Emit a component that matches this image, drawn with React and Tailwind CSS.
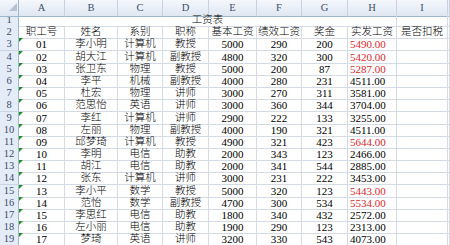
import React from 'react';

const grid = 'grid grid-cols-[19px_46px_53px_45px_46px_48px_45px_46px_49px_51px_1fr]';
const letters = ['A', 'B', 'C', 'D', 'E', 'F', 'G', 'H', 'I', ''];
const heads = ['职工号', '姓名', '系别', '职称', '基本工资', '绩效工资', '奖金', '实发工资', '是否扣税'];

const rows = [
  ['01', '李小明', '计算机', '教授', 5000, 290, 200, '5490.00', true],
  ['02', '胡大江', '计算机', '副教授', 4800, 320, 300, '5420.00', true],
  ['03', '张卫东', '物理', '教授', 5000, 200, 87, '5287.00', true],
  ['04', '李平', '机械', '副教授', 4000, 280, 231, '4511.00'],
  ['05', '杜宏', '物理', '讲师', 3000, 270, 311, '3581.00'],
  ['06', '范思怡', '英语', '讲师', 3000, 360, 344, '3704.00'],
  ['07', '李红', '计算机', '讲师', 2900, 222, 133, '3255.00'],
  ['08', '左丽', '物理', '副教授', 4000, 190, 321, '4511.00'],
  ['09', '邱梦琦', '计算机', '教授', 4900, 321, 423, '5644.00', true],
  ['10', '李明', '电信', '助教', 2000, 343, 123, '2466.00'],
  ['11', '胡江', '电信', '助教', 2000, 341, 544, '2885.00'],
  ['12', '张东', '计算机', '讲师', 3000, 231, 222, '3453.00'],
  ['13', '李小平', '数学', '教授', 5000, 320, 123, '5443.00', true],
  ['14', '范怡', '数学', '副教授', 4700, 300, 534, '5534.00', true],
  ['15', '李思红', '电信', '助教', 1800, 340, 432, '2572.00'],
  ['16', '左小丽', '电信', '助教', 1900, 290, 123, '2313.00'],
  ['17', '梦琦', '英语', '讲师', 3200, 330, 543, '4073.00'],
];

const cell = 'border-r border-b border-[#d4dbe7] flex items-center justify-center whitespace-nowrap overflow-hidden';
const cjk = 'text-[10.5px] leading-[12px] font-light';
const num = 'text-[11px] leading-[12px]';

function RowNum({ n }) {
  return (
    <div className="bg-[#e4ecf7] border-r border-r-[#9eb6ce] border-b border-b-[#c9d5e4] flex items-center justify-center text-[10.5px] leading-[12px] text-[#3b4d6e]">
      {n}
    </div>
  );
}

export default function App() {
  return (
    <div className="w-[450px] h-[245px] overflow-hidden bg-white text-black font-['Liberation_Serif','Noto_Sans_CJK_SC',serif]">
      {/* column letters */}
      <div className={`${grid} h-[14px]`}>
        <div className="relative bg-gradient-to-b from-[#f4f7fb] to-[#dfe7f2] border-r border-r-[#9eb6ce] border-b border-b-[#9eb6ce]">
          <svg className="absolute left-[9px] top-[3px]" width="8" height="8" viewBox="0 0 8 8">
            <polygon points="8,0 8,8 0,8" fill="#b4c2d4" />
          </svg>
        </div>
        {letters.map((l, i) => (
          <div
            key={i}
            className="bg-gradient-to-b from-[#f4f7fb] to-[#dfe7f2] border-r border-r-[#c5d2e3] border-b border-b-[#9eb6ce] flex items-center justify-center text-[10.5px] text-[#3b4d6e]"
          >
            {l}
          </div>
        ))}
      </div>

      {/* row 1: title */}
      <div className={`${grid} h-[12.2px]`}>
        <RowNum n={1} />
        <div className={`${cell} ${cjk} col-span-8`}>工资表</div>
        <div className={cell}></div>
        <div className={cell}></div>
      </div>

      {/* row 2: headers */}
      <div className={`${grid} h-[12.2px]`}>
        <RowNum n={2} />
        {heads.map((h) => (
          <div key={h} className={`${cell} ${cjk}`}>{h}</div>
        ))}
        <div className={cell}></div>
      </div>

      {rows.map((r, i) => (
        <div key={r[0]} className={`${grid} h-[12.2px]`}>
          <RowNum n={i + 3} />
          <div className={`${cell} ${num} relative`}>
            <svg className="absolute left-0 top-0" width="4" height="4" viewBox="0 0 4 4">
              <polygon points="0,0 4,0 0,4" fill="#1e8c1e" />
            </svg>
            {r[0]}
          </div>
          <div className={`${cell} ${cjk}`}>{r[1]}</div>
          <div className={`${cell} ${cjk}`}>{r[2]}</div>
          <div className={`${cell} ${cjk}`}>{r[3]}</div>
          <div className={`${cell} ${num}`}>{r[4]}</div>
          <div className={`${cell} ${num}`}>{r[5]}</div>
          <div className={`${cell} ${num}`}>{r[6]}</div>
          <div className={`${cell} ${num} !justify-start pl-[2px] ${r[8] ? 'text-[#d9282b]' : ''}`}>{r[7]}</div>
          <div className={cell}></div>
          <div className={cell}></div>
        </div>
      ))}
    </div>
  );
}
